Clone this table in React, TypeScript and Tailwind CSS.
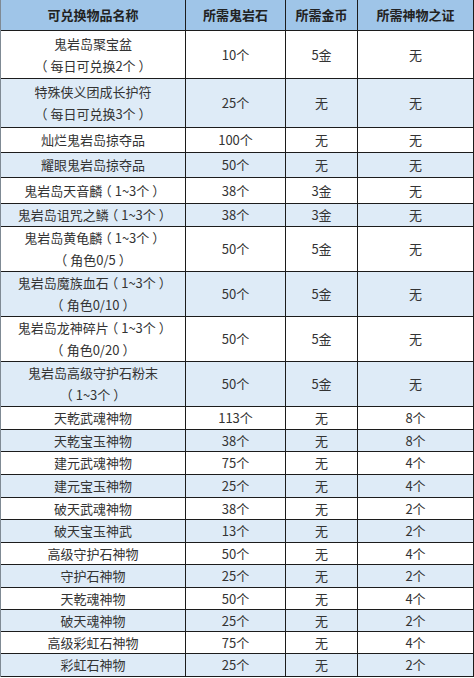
const rows: { h: string; name: string[]; stone: string; gold: string; proof: string }[] = [
  { h: "h-[48px]", name: ["鬼岩岛聚宝盆", "（每日可兑换2个）"], stone: "10个", gold: "5金", proof: "无" },
  { h: "h-[49px]", name: ["特殊侠义团成长护符", "（每日可兑换3个）"], stone: "25个", gold: "无", proof: "无" },
  { h: "h-[25px]", name: ["灿烂鬼岩岛掠夺品"], stone: "100个", gold: "无", proof: "无" },
  { h: "h-[25px]", name: ["耀眼鬼岩岛掠夺品"], stone: "50个", gold: "无", proof: "无" },
  { h: "h-[26px]", name: ["鬼岩岛天音麟（1~3个）"], stone: "38个", gold: "3金", proof: "无" },
  { h: "h-[23px]", name: ["鬼岩岛诅咒之鳞（1~3个）"], stone: "38个", gold: "3金", proof: "无" },
  { h: "h-[45px]", name: ["鬼岩岛黄龟麟（1~3个）", "（角色0/5）"], stone: "50个", gold: "5金", proof: "无" },
  { h: "h-[45px]", name: ["鬼岩岛魔族血石（1~3个）", "（角色0/10）"], stone: "50个", gold: "5金", proof: "无" },
  { h: "h-[45px]", name: ["鬼岩岛龙神碎片（1~3个）", "（角色0/20）"], stone: "50个", gold: "5金", proof: "无" },
  { h: "h-[45px]", name: ["鬼岩岛高级守护石粉末", "（1~3个）"], stone: "50个", gold: "5金", proof: "无" },
  { h: "h-[23px]", name: ["天乾武魂神物"], stone: "113个", gold: "无", proof: "8个" },
  { h: "h-[22px]", name: ["天乾宝玉神物"], stone: "38个", gold: "无", proof: "8个" },
  { h: "h-[23px]", name: ["建元武魂神物"], stone: "75个", gold: "无", proof: "4个" },
  { h: "h-[23px]", name: ["建元宝玉神物"], stone: "25个", gold: "无", proof: "4个" },
  { h: "h-[22px]", name: ["破天武魂神物"], stone: "38个", gold: "无", proof: "2个" },
  { h: "h-[23px]", name: ["破天宝玉神武"], stone: "13个", gold: "无", proof: "2个" },
  { h: "h-[22px]", name: ["高级守护石神物"], stone: "50个", gold: "无", proof: "4个" },
  { h: "h-[23px]", name: ["守护石神物"], stone: "25个", gold: "无", proof: "2个" },
  { h: "h-[22px]", name: ["天乾魂神物"], stone: "50个", gold: "无", proof: "4个" },
  { h: "h-[22px]", name: ["破天魂神物"], stone: "25个", gold: "无", proof: "2个" },
  { h: "h-[22px]", name: ["高级彩虹石神物"], stone: "75个", gold: "无", proof: "4个" },
  { h: "h-[23px]", name: ["彩虹石神物"], stone: "25个", gold: "无", proof: "2个" },
];

const cell = "flex flex-col items-center justify-center border-r border-[#1c1c1c] text-center";

// brackets are centred in their full-width box in the source font:
// take the half-width form and pad it back out to a full em
function Line({ text }: { text: string }) {
  const parts = text.split(/([（）])/).filter(Boolean);
  return (
    <span className="whitespace-nowrap">
      {parts.map((p, k) =>
        p === "（" || p === "）" ? (
          <span key={k} className="inline-block px-[3px] [font-feature-settings:'halt']">
            {p}
          </span>
        ) : (
          <span key={k}>{p}</span>
        )
      )}
    </span>
  );
}

export default function App() {
  return (
    <div
      className="w-[474px] bg-white text-[13px] leading-[22px] text-[#333]"
      style={{ fontFamily: '"Noto Sans CJK SC", "Microsoft YaHei", sans-serif' }}
    >
      <div className="flex flex-col border-l border-[#7f8a94]">
        <div className="grid h-[31px] grid-cols-[185px_100px_72px_116px] border-b border-[#1c1c1c] bg-[#9fc5e8] font-bold text-[#222]">
          <div className={cell}>可兑换物品名称</div>
          <div className={cell}>所需鬼岩石</div>
          <div className={cell}>所需金币</div>
          <div className={cell}>所需神物之证</div>
        </div>
        {rows.map((r, i) => (
          <div
            key={i}
            className={`grid grid-cols-[185px_100px_72px_116px] border-b border-[#1c1c1c] ${r.h} ${i % 2 === 1 ? "bg-[#deebf7]" : "bg-white"}`}
          >
            <div className={cell}>
              {r.name.map((t, j) => (
                <Line key={j} text={t} />
              ))}
            </div>
            <div className={cell}>{r.stone}</div>
            <div className={cell}>{r.gold}</div>
            <div className={cell}>{r.proof}</div>
          </div>
        ))}
      </div>
    </div>
  );
}
